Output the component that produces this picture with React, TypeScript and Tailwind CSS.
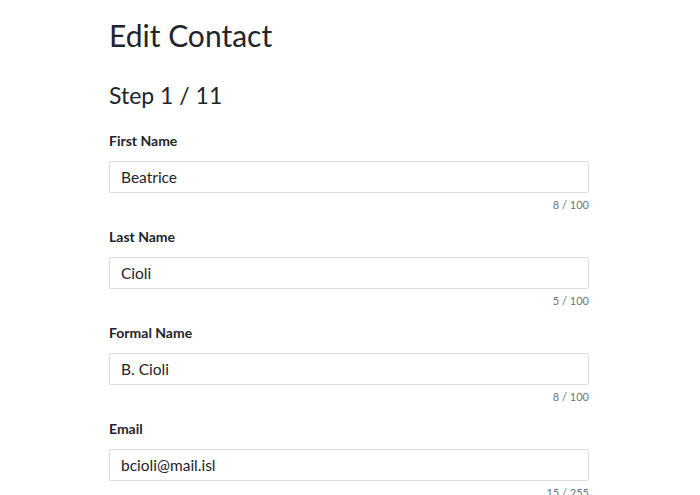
import * as React from 'react';

type Field = { label: string; value: string; max: number };

const fields: Field[] = [
  { label: 'First Name', value: 'Beatrice', max: 100 },
  { label: 'Last Name', value: 'Cioli', max: 100 },
  { label: 'Formal Name', value: 'B. Cioli', max: 100 },
  { label: 'Email', value: 'bcioli@mail.isl', max: 255 },
];

export default function App() {
  return (
    <div className="h-[495px] w-[700px] overflow-hidden bg-white font-['Lato',sans-serif] text-[#212529]">
      <div className="ml-[109px] w-[480px] pt-[15px]">
        {/* Header */}
        <h1 className="text-[30px] leading-[40px] font-normal">Edit Contact</h1>
        <h2 className="mt-[24px] text-[23px] leading-[32px] font-normal">Step 1 / 11</h2>

        {/* Fields */}
        <div className="mt-[20px] flex flex-col gap-[14px]">
          {fields.map((f) => (
            <div key={f.label} className="flex flex-col">
              <label className="text-[14px] leading-[20px] font-bold">{f.label}</label>
              <input
                readOnly
                value={f.value}
                className="mt-[10px] h-[32px] w-full rounded-[2px] border border-[#dcdcdc] px-[11px] text-[15.5px] text-[#212529] outline-none"
              />
              <span className="mt-[4px] self-end text-[11px] leading-[16px] text-[#6c757d]">
                {f.value.length} / {f.max}
              </span>
            </div>
          ))}
        </div>
      </div>
    </div>
  );
}
